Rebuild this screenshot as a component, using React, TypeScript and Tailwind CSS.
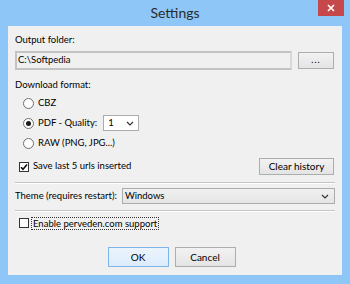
const font = { fontFamily: 'Lato, "Noto Sans", sans-serif' };

const Radio = ({ checked, label }: { checked?: boolean; label: string }) => (
  <div className="flex items-center gap-[4px]">
    <span className="w-[11px] h-[11px] rounded-full border border-[#6f6f6f] bg-white flex items-center justify-center">
      {checked && <span className="w-[5px] h-[5px] rounded-full bg-[#1a1a1a]" />}
    </span>
    <span>{label}</span>
  </div>
);

const Check = ({ checked }: { checked?: boolean }) => (
  <span className="w-[10px] h-[10px] border border-[#333] bg-white flex items-center justify-center shrink-0">
    {checked && (
      <svg width="8" height="8" viewBox="0 0 8 8">
        <path d="M1 4.2 L3 6.3 L7 1.5" fill="none" stroke="#111" strokeWidth="1.6" />
      </svg>
    )}
  </span>
);

const Chevron = () => (
  <svg width="8" height="5" viewBox="0 0 8 5">
    <path d="M1 1 L4 4 L7 1" fill="none" stroke="#333" strokeWidth="1.2" />
  </svg>
);

const Button = ({ children, className = "", primary }: { children: React.ReactNode; className?: string; primary?: boolean }) => (
  <button
    className={
      "flex items-center justify-center border text-[10px] " +
      (primary
        ? "border-[#7eb4ea] bg-gradient-to-b from-[#ecf4fc] to-[#dcecfc] "
        : "border-[#adadad] bg-gradient-to-b from-[#f2f2f2] to-[#e4e4e4] ") +
      className
    }
  >
    {children}
  </button>
);

const Separator = () => <div className="h-[2px] border-t border-[#c4c4c4] border-b border-b-white" />;

export default function App() {
  return (
    <div className="w-[350px] h-[284px] bg-[#8ec7f7] flex flex-col relative overflow-hidden" style={font}>
      <div className="h-[26px] flex items-center justify-center text-[14px] text-[#2b2b2b] pb-[2px]">Settings</div>
      <div className="absolute top-0 right-[6px] w-[26px] h-[16px] bg-[#c7484b] flex items-center justify-center">
        <svg width="8" height="8" viewBox="0 0 8 8">
          <path d="M1 1 L7 7 M7 1 L1 7" stroke="white" strokeWidth="1.7" />
        </svg>
      </div>
      <div className="mx-[8px] mb-[9px] flex-1 bg-[#f0f0f0] px-[7px] text-[9.5px] text-black flex flex-col">
        <div className="mt-[8px] h-[12px] leading-[12px]">Output folder:</div>
        <div className="mt-[5px] flex gap-[6px] h-[19px]">
          <div className="w-[277px] border-2 border-[#c3c3c3] border-r-[#d8d8d8] flex items-center pl-[1px]">C:\Softpedia</div>
          <Button className="w-[36px] h-[17px] mt-[1px]">
            <span className="tracking-[1px] text-[9px] leading-none pb-[3px]">...</span>
          </Button>
        </div>
        <div className="mt-[9px] h-[12px] leading-[12px]">Download format:</div>
        <div className="mt-[5px] h-[14px] pl-[8px] flex items-center">
          <Radio label="CBZ" />
        </div>
        <div className="mt-[5px] h-[16px] pl-[8px] flex items-center gap-[6px]">
          <Radio checked label="PDF - Quality:" />
          <div className="w-[36px] h-[16px] border border-[#acacac] bg-white flex items-center justify-between px-[4px]">
            <span>1</span>
            <Chevron />
          </div>
        </div>
        <div className="mt-[5px] h-[14px] pl-[8px] flex items-center">
          <Radio label="RAW (PNG, JPG...)" />
        </div>
        <div className="mt-[8px] h-[17px] flex items-center justify-between">
          <div className="flex items-center gap-[4px] pl-[4px]">
            <Check checked />
            <span>Save last 5 urls inserted</span>
          </div>
          <Button className="w-[75px] h-[17px] mr-[1px]">Clear history</Button>
        </div>
        <div className="mt-[7px]">
          <Separator />
        </div>
        <div className="mt-[4px] h-[16px] flex items-center gap-[5px]">
          <span>Theme (requires restart):</span>
          <div className="flex-1 h-[16px] border border-[#acacac] bg-gradient-to-b from-[#f0f0f0] to-[#e5e5e5] flex items-center justify-between pl-[2px] pr-[5px]">
            <span>Windows</span>
            <Chevron />
          </div>
        </div>
        <div className="mt-[6px]">
          <Separator />
        </div>
        <div className="mt-[4px] h-[14px] flex items-center gap-[3px] pl-[4px]">
          <Check />
          <span className="outline outline-1 outline-dotted outline-[#333] px-[1px] leading-[11px]">Enable perveden.com support</span>
        </div>
        <div className="mt-[17px] flex justify-center gap-[6px] pr-[7px]">
          <Button primary className="w-[61px] h-[20px]">OK</Button>
          <Button className="w-[61px] h-[20px]">Cancel</Button>
        </div>
      </div>
    </div>
  );
}
